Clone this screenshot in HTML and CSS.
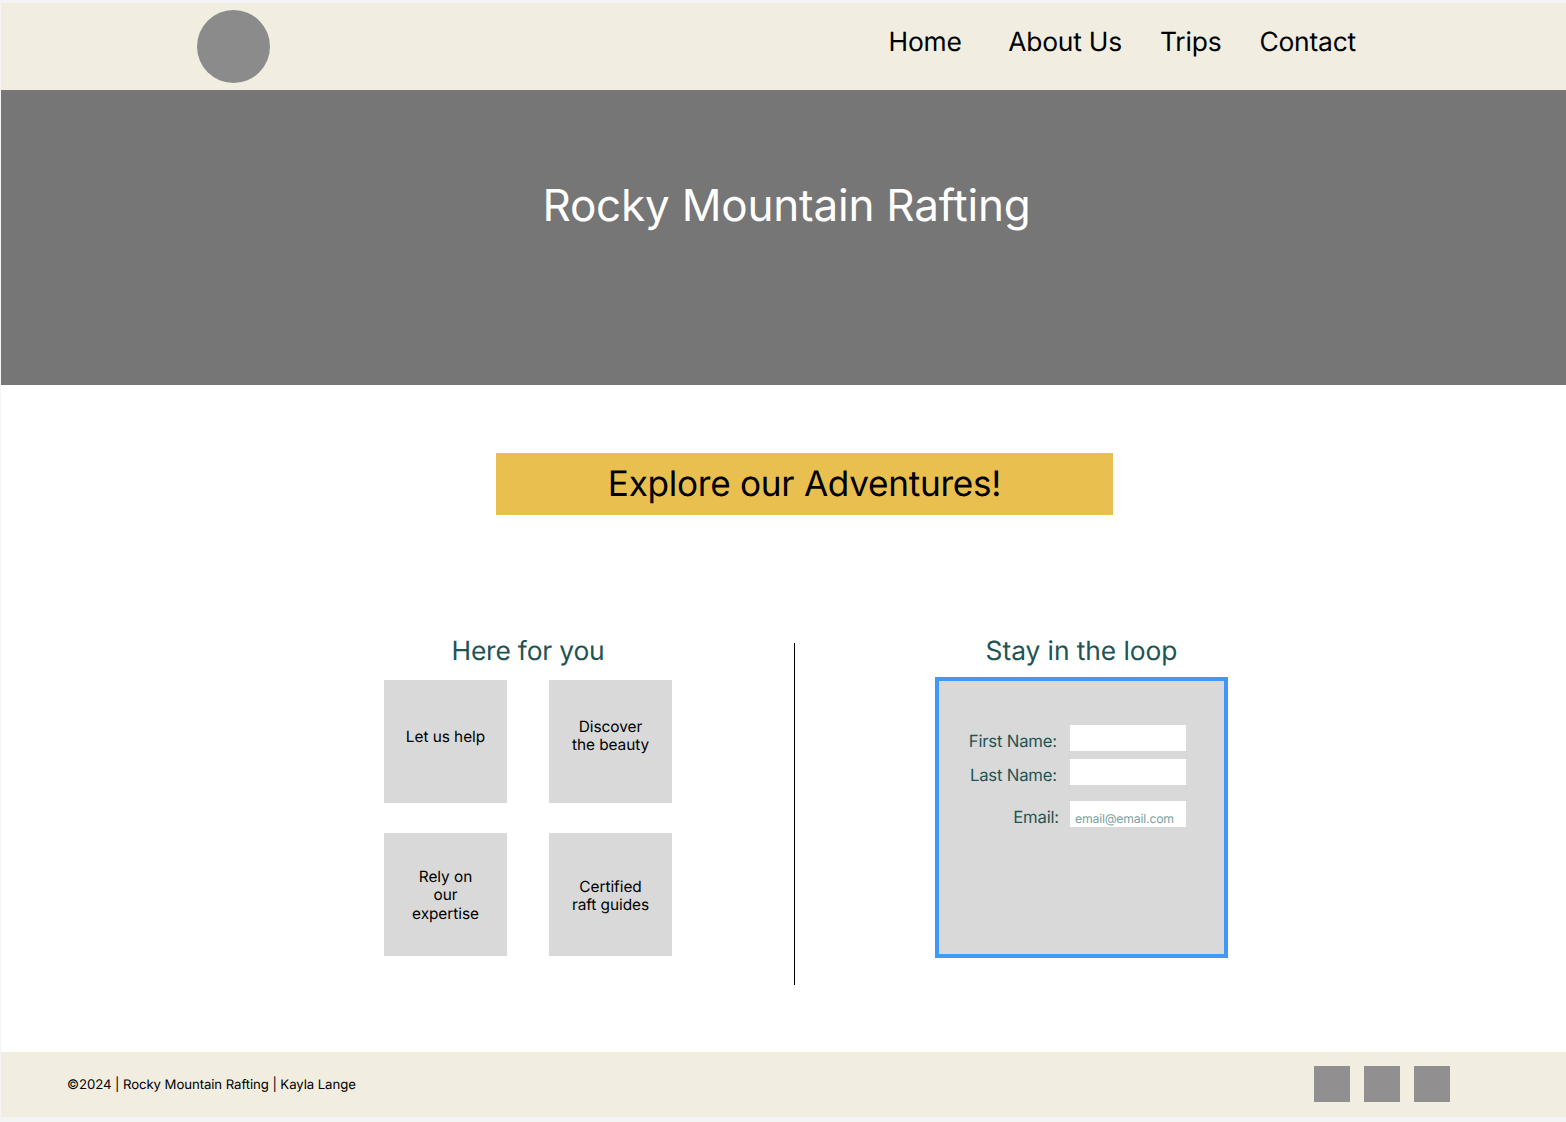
FILE: index.html
```html
<!DOCTYPE html>
<html lang="en">
<head>
<meta charset="utf-8">
<title>Rocky Mountain Rafting</title>
<link rel="stylesheet" href="styles.css">
</head>
<body>
<div class="page">
  <header class="header">
    <div class="logo"></div>
    <nav class="nav"><a class="home">Home</a><a class="about">About Us</a><a class="trips">Trips</a><a>Contact</a></nav>
  </header>
  <section class="hero"><h1>Rocky Mountain Rafting</h1></section>
  <main class="main">
    <a class="cta">Explore our Adventures!</a>
    <div class="columns">
      <section class="features">
        <h2>Here for you</h2>
        <div class="grid">
          <div class="card help">Let us help</div>
          <div class="card beauty">Discover<br>the beauty</div>
          <div class="card expertise">Rely on<br>our<br>expertise</div>
          <div class="card guides">Certified<br>raft guides</div>
        </div>
      </section>
      <div class="divider"></div>
      <section class="signup">
        <h2>Stay in the loop</h2>
        <form class="form">
          <div class="row"><span class="label">First Name:</span><div class="field"></div></div>
          <div class="row"><span class="label">Last Name:</span><div class="field"></div></div>
          <div class="row email"><span class="label">Email:</span><div class="field">email@email.com</div></div>
        </form>
      </section>
    </div>
  </main>
  <footer class="footer">
    <p>©2024 | Rocky Mountain Rafting | Kayla Lange</p>
    <div class="social"><span></span><span></span><span></span></div>
  </footer>
</div>
</body>
</html>
```
FILE: styles.css
```css
* { box-sizing: border-box; }
body { margin: 0; background: #f4f4f4; font-family: Inter, sans-serif; color: #000; text-rendering: geometricPrecision; }
h1, h2, p { margin: 0; font-weight: 400; }
.page { margin: 3px 0 5px 1px; height: 1114px; background: #fff; display: flex; flex-direction: column; overflow: hidden; }
.header { height: 87px; background: #f1ede0; display: flex; justify-content: space-between; padding: 7px 210px 0 195.5px; }
.logo { width: 73px; height: 73px; border-radius: 50%; background: #8b8b8b; }
.nav { display: flex; font-size: 26.4px; line-height: 32px; letter-spacing: -0.2px; padding-top: 16px; white-space: nowrap; }
.home { margin-right: 46.5px; }
.about, .trips { margin-right: 38px; }
.hero { height: 295px; background: #767676; color: #fff; text-align: center; padding: 88px 0 0 6px; }
h1 { font-size: 44px; line-height: 54px; letter-spacing: -0.2px; }
.main { height: 667px; padding-top: 68px; }
.cta { display: block; width: 617px; height: 62px; margin-left: 495px; background: #e9c04f; font-size: 35.2px; line-height: 63px; letter-spacing: -0.3px; text-align: center; }
.columns { display: flex; margin: 120px 0 0 383px; }
.features { width: 288px; }
h2 { font-size: 26.4px; line-height: 32px; letter-spacing: -0.18px; color: #1f5454; text-align: center; white-space: nowrap; }
.signup h2 { letter-spacing: -0.08px; }
.grid { display: grid; grid-template-columns: 123px 123px; column-gap: 42px; row-gap: 30px; margin-top: 13px; }
.card { height: 123px; background: #d9d9d9; font-size: 15.4px; line-height: 18.6px; letter-spacing: -0.05px; text-align: center; }
.help { padding-top: 48px; }
.beauty { padding-top: 37.5px; }
.expertise { padding-top: 34.5px; }
.guides { padding-top: 44.5px; }
.divider { width: 1px; height: 342px; margin: 8px 0 0 122px; background: #000; }
.signup { width: 293px; margin-left: 140px; }
.form { height: 281px; margin-top: 10px; background: #d9d9d9; border: 4px solid #4198f7; padding-top: 44px; }
.row { display: flex; height: 26px; margin-bottom: 8px; }
.label { width: 118px; padding-top: 7px; font-size: 16.7px; line-height: 20px; letter-spacing: -0.18px; color: #1f5454; text-align: right; }
.field { width: 116px; margin-left: 13px; background: #fff; font-size: 12.3px; line-height: 15px; letter-spacing: -0.22px; padding: 10px 0 0 5px; color: #7ba3a3; }
.email { margin-top: 16px; }
.email .label { width: 120px; }
.email .field { margin-left: 11px; }
.footer { height: 65px; background: #f1ede0; display: flex; justify-content: space-between; padding: 14px 116px 0 66px; }
.footer p { font-size: 13.2px; line-height: 16px; letter-spacing: -0.08px; padding-top: 11px; }
.social { display: flex; gap: 14px; }
.social span { width: 36px; height: 36px; background: #918f8f; }
```
